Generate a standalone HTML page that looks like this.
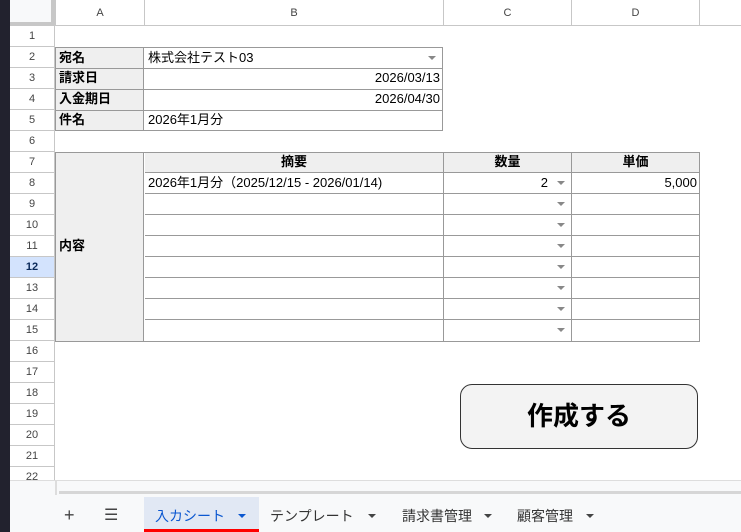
<!DOCTYPE html>
<html><head><meta charset="utf-8"><style>
*{margin:0;padding:0;box-sizing:border-box}
body{width:741px;height:532px;overflow:hidden;background:#fff;font-family:"Liberation Sans","Noto Sans CJK JP",sans-serif;position:relative}
.a{position:absolute}
.hd{position:absolute;font-size:11px;color:#444;text-align:center}
.c{position:absolute;font-size:13px;color:#000;line-height:20px;white-space:nowrap}
.g{background:#efefef}
.b{font-weight:bold}
.dd{position:absolute;width:0;height:0;border-left:4px solid transparent;border-right:4px solid transparent;border-top:4px solid #888}
</style></head><body>
<div class="a" style="left:0;top:0;width:10px;height:532px;background:#22222e"></div>
<div class="a" style="left:10px;top:0;width:731px;height:26px;background:#fff;border-bottom:1px solid #c7c7c7"></div>
<div class="a" style="left:10px;top:0;width:45px;height:26px;background:#f8f9fa;border-right:4px solid #c7c7c7;border-bottom:4px solid #c7c7c7"></div>
<div class="hd" style="left:55px;top:0;width:89px;height:26px;line-height:26px;border-left:1px solid #c7c7c7">A</div>
<div class="hd" style="left:144px;top:0;width:299px;height:26px;line-height:26px;border-left:1px solid #c7c7c7">B</div>
<div class="hd" style="left:443px;top:0;width:128px;height:26px;line-height:26px;border-left:1px solid #c7c7c7">C</div>
<div class="hd" style="left:571px;top:0;width:128px;height:26px;line-height:26px;border-left:1px solid #c7c7c7">D</div>
<div class="hd" style="left:699px;top:0;width:42px;height:26px;border-left:1px solid #c7c7c7"></div>
<div id="rows"></div>
<script>
var h='';for(var i=1;i<=22;i++){var t=26+21*(i-1);var s=i==12;h+='<div class="hd" style="left:10px;top:'+t+'px;width:45px;height:21px;line-height:21px;border-bottom:1px solid #c7c7c7;border-right:1px solid #c7c7c7;'+(s?'background:#d3e3fd;color:#0b2a5a;font-weight:bold;':'')+'">'+i+'</div>';}
document.getElementById('rows').innerHTML=h;
</script>
<div class="a" style="left:55px;top:47px;width:388px;height:84px;border:1px solid #999"></div>
<div class="a g" style="left:56px;top:48px;width:88px;height:82px;border-right:1px solid #999"></div>
<div class="a" style="left:56px;top:68px;width:386px;height:1px;background:#999"></div>
<div class="a" style="left:56px;top:89px;width:386px;height:1px;background:#999"></div>
<div class="a" style="left:56px;top:110px;width:386px;height:1px;background:#999"></div>
<div class="c b" style="left:59px;top:48px">宛名</div>
<div class="c b" style="left:59px;top:68px">請求日</div>
<div class="c b" style="left:59px;top:89px">入金期日</div>
<div class="c b" style="left:59px;top:110px">件名</div>
<div class="c" style="left:148px;top:48px">株式会社テスト03</div>
<div class="dd" style="left:428px;top:56px"></div>
<div class="c" style="left:300px;top:68px;width:140px;text-align:right">2026/03/13</div>
<div class="c" style="left:300px;top:89px;width:140px;text-align:right">2026/04/30</div>
<div class="c" style="left:148px;top:110px">2026年1月分</div>
<div class="a" style="left:55px;top:152px;width:645px;height:190px;border:1px solid #999"></div>
<div class="a g" style="left:56px;top:153px;width:88px;height:188px;border-right:1px solid #999"></div>
<div class="a g" style="left:145px;top:153px;width:554px;height:20px;"></div>
<div id="tbl"></div>
<script>
var h='';for(var i=8;i<=15;i++){var t=26+21*(i-1);h+='<div class="a" style="left:145px;top:'+(t-1)+'px;width:554px;height:1px;background:#999"></div>';h+='<div class="dd" style="left:557px;top:'+(t+8)+'px"></div>';}
document.getElementById('tbl').innerHTML=h;
</script>
<div class="a" style="left:443px;top:153px;width:1px;height:188px;background:#999"></div>
<div class="a" style="left:571px;top:153px;width:1px;height:188px;background:#999"></div>
<div class="c b" style="left:145px;top:152px;width:298px;text-align:center">摘要</div>
<div class="c b" style="left:444px;top:152px;width:127px;text-align:center">数量</div>
<div class="c b" style="left:572px;top:152px;width:127px;text-align:center">単価</div>
<div class="c b" style="left:59px;top:236px">内容</div>
<div class="c" style="left:148px;top:173px">2026年1月分（2025/12/15 - 2026/01/14)</div>
<div class="c" style="left:500px;top:173px;width:48px;text-align:right">2</div>
<div class="c" style="left:580px;top:173px;width:117px;text-align:right">5,000</div>
<div class="a" style="left:460px;top:384px;width:238px;height:65px;border:1px solid #333;border-radius:12px;background:#f3f3f3;font-size:26px;font-weight:bold;text-align:center;line-height:63px">作成する</div>
<div class="a" style="left:10px;top:480px;width:731px;height:15px;background:#f8f9fa;border-top:1px solid #ddd"></div>
<div class="a" style="left:55px;top:480px;width:2px;height:15px;background:#ddd"></div>
<div class="a" style="left:59px;top:491px;width:682px;height:3px;background:#d6d6d6"></div>
<div class="a" style="left:10px;top:495px;width:731px;height:37px;background:#f8f9fa"></div>
<div class="a" style="left:64px;top:505px;font-size:18px;color:#444">+</div>
<div class="a" style="left:104px;top:505px;font-size:16px;color:#444">☰</div>
<div class="a" style="left:144px;top:497px;width:115px;height:35px;background:#e1e8f4"></div>
<div class="a" style="left:144px;top:529px;width:115px;height:3px;background:#f00"></div>
<div class="a" style="left:155px;top:506px;font-size:14px;color:#0b57d0">入カシート</div>
<div class="dd" style="left:238px;top:514px;border-top-color:#0b57d0"></div>
<div class="a" style="left:270px;top:506px;font-size:14px;color:#333">テンプレート</div>
<div class="dd" style="left:368px;top:514px;border-top-color:#444"></div>
<div class="a" style="left:402px;top:506px;font-size:14px;color:#333">請求書管理</div>
<div class="dd" style="left:484px;top:514px;border-top-color:#444"></div>
<div class="a" style="left:517px;top:506px;font-size:14px;color:#333">顧客管理</div>
<div class="dd" style="left:586px;top:514px;border-top-color:#444"></div>
</body></html>
